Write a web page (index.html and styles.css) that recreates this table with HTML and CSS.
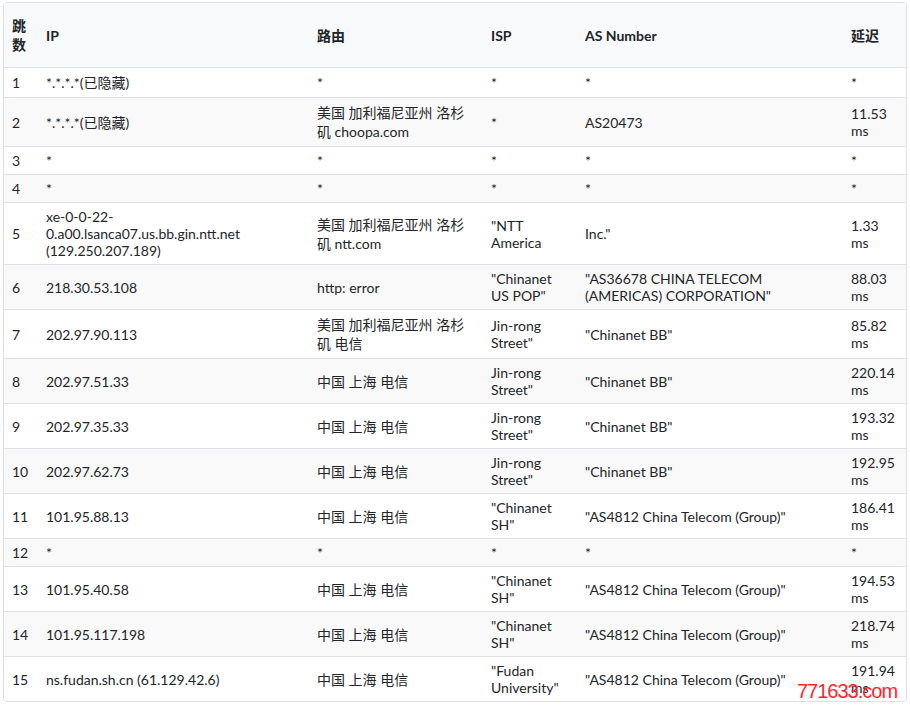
FILE: index.html
```html
<!DOCTYPE html>
<html lang="zh-CN">
<head>
<meta charset="utf-8">
<title>Traceroute</title>
<link rel="stylesheet" href="styles.css">
</head>
<body>
<div class="wrap">
  <table class="trace">
    <colgroup>
      <col class="c-hop">
      <col class="c-ip">
      <col class="c-route">
      <col class="c-isp">
      <col class="c-as">
      <col class="c-lat">
    </colgroup>
    <thead>
      <tr><th><span class="zh">跳数</span></th><th>IP</th><th><span class="zh">路由</span></th><th>ISP</th><th>AS Number</th><th><span class="zh">延迟</span></th></tr>
    </thead>
    <tbody>
      <tr><td>1</td><td><span class="zh">*.*.*.*(已隐藏)</span></td><td>*</td><td>*</td><td>*</td><td>*</td></tr>
      <tr><td>2</td><td><span class="zh">*.*.*.*(已隐藏)</span></td><td><span class="zh">美国 加利福尼亚州 洛杉矶 choopa.com</span></td><td>*</td><td>AS20473</td><td>11.53 ms</td></tr>
      <tr><td>3</td><td>*</td><td>*</td><td>*</td><td>*</td><td>*</td></tr>
      <tr><td>4</td><td>*</td><td>*</td><td>*</td><td>*</td><td>*</td></tr>
      <tr><td>5</td><td>xe-0-0-22-<br>0.a00.lsanca07.us.bb.gin.ntt.net (129.250.207.189)</td><td><span class="zh">美国 加利福尼亚州 洛杉矶 ntt.com</span></td><td>"NTT America</td><td>Inc."</td><td>1.33 ms</td></tr>
      <tr><td>6</td><td>218.30.53.108</td><td>http: error</td><td>"Chinanet US POP"</td><td>"AS36678 CHINA TELECOM (AMERICAS) CORPORATION"</td><td>88.03 ms</td></tr>
      <tr><td>7</td><td>202.97.90.113</td><td><span class="zh">美国 加利福尼亚州 洛杉矶 电信</span></td><td>Jin-rong Street"</td><td>"Chinanet BB"</td><td>85.82 ms</td></tr>
      <tr><td>8</td><td>202.97.51.33</td><td><span class="zh">中国 上海 电信</span></td><td>Jin-rong Street"</td><td>"Chinanet BB"</td><td>220.14 ms</td></tr>
      <tr><td>9</td><td>202.97.35.33</td><td><span class="zh">中国 上海 电信</span></td><td>Jin-rong Street"</td><td>"Chinanet BB"</td><td>193.32 ms</td></tr>
      <tr><td>10</td><td>202.97.62.73</td><td><span class="zh">中国 上海 电信</span></td><td>Jin-rong Street"</td><td>"Chinanet BB"</td><td>192.95 ms</td></tr>
      <tr><td>11</td><td>101.95.88.13</td><td><span class="zh">中国 上海 电信</span></td><td>"Chinanet SH"</td><td>"AS4812 China Telecom (Group)"</td><td>186.41 ms</td></tr>
      <tr><td>12</td><td>*</td><td>*</td><td>*</td><td>*</td><td>*</td></tr>
      <tr><td>13</td><td>101.95.40.58</td><td><span class="zh">中国 上海 电信</span></td><td>"Chinanet SH"</td><td>"AS4812 China Telecom (Group)"</td><td>194.53 ms</td></tr>
      <tr><td>14</td><td>101.95.117.198</td><td><span class="zh">中国 上海 电信</span></td><td>"Chinanet SH"</td><td>"AS4812 China Telecom (Group)"</td><td>218.74 ms</td></tr>
      <tr><td>15</td><td>ns.fudan.sh.cn (61.129.42.6)</td><td><span class="zh">中国 上海 电信</span></td><td>"Fudan University"</td><td>"AS4812 China Telecom (Group)"</td><td>191.94 ms</td></tr>
    </tbody>
  </table>
  <div class="watermark">771633.com</div>
</div>
</body>
</html>
```
FILE: styles.css
```css
html, body {
  margin: 0;
  padding: 0;
  background: #ffffff;
}
body {
  font-family: Lato, "Noto Sans CJK SC", sans-serif;
  font-size: 14px;
  line-height: 17px;
  color: #212529;
}
.wrap {
  position: relative;
  padding: 2px 3px;
  width: 904px;
}
.trace {
  width: 904px;
  table-layout: fixed;
  border-collapse: separate;
  border-spacing: 0;
  border: 1px solid #dee2e6;
  border-radius: 4px;
  overflow: hidden;
}
.c-hop { width: 34px; }
.c-ip { width: 271px; }
.c-route { width: 174px; }
.c-isp { width: 94px; }
.c-as { width: 266px; }
.c-lat { width: 63px; }
.trace th,
.trace td {
  text-align: left;
  vertical-align: middle;
  padding: 5px 8px;
  border-top: 1px solid #dee2e6;
}
.trace th {
  background: #f8f9fa;
  font-weight: 700;
  padding: 13px 8px;
  border-top: none;
}
.trace tbody tr:nth-child(even) td {
  background: #f9f9f9;
}
.zh {
  line-height: 19px;
}
.watermark {
  position: absolute;
  left: 797px;
  top: 681px;
  font-family: "Liberation Sans", Arial, sans-serif;
  font-size: 20px;
  line-height: 20px;
  letter-spacing: -1px;
  color: #ff1f2f;
}
```
